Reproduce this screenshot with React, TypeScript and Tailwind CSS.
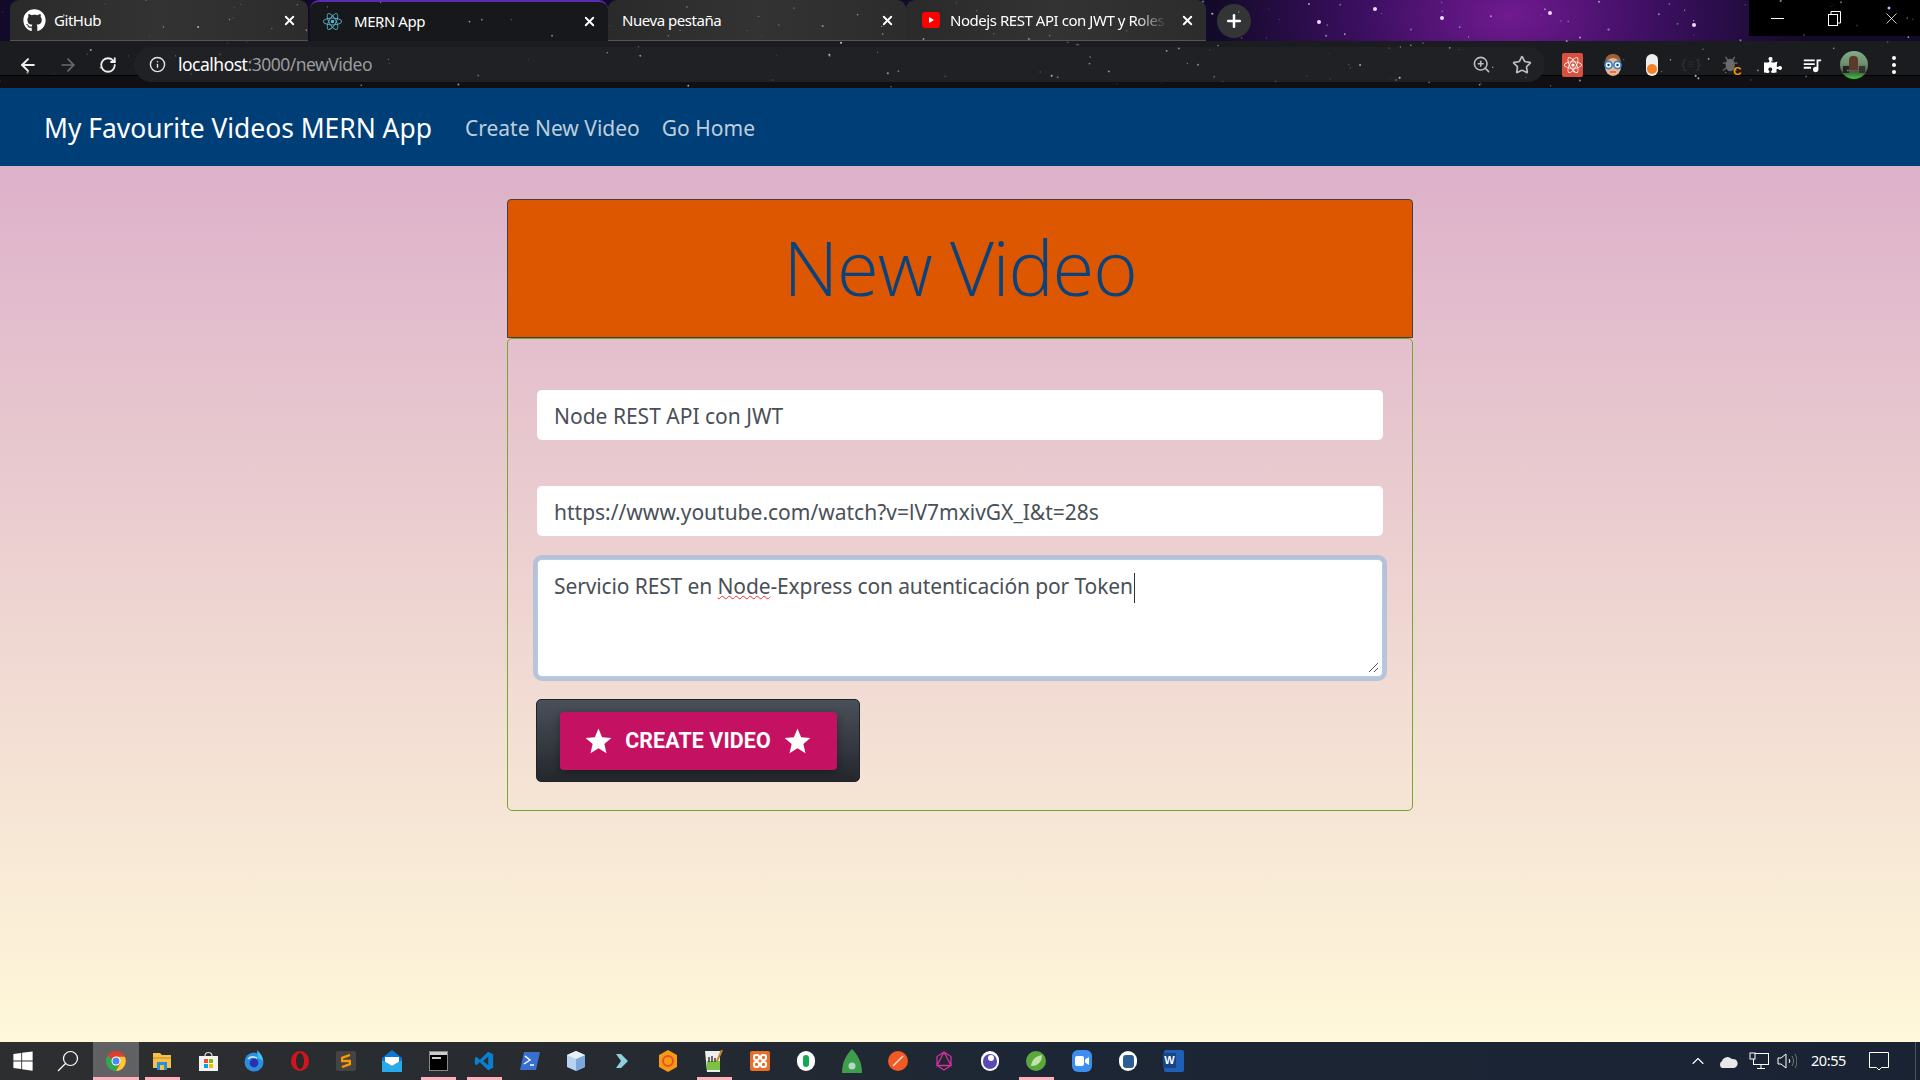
import { ReactNode } from 'react';
import { ArrowLeft, ArrowRight, ChevronUp, Info, Plus, RotateCw, Search, Star, X, ZoomIn } from 'lucide-react';
import { FaGithub, FaPuzzlePiece, FaReact, FaWindows } from 'react-icons/fa';
import { MdQueueMusic, MdStar } from 'react-icons/md';

// pseudo random star field for the wallpaper
function makeStars(count: number) {
  let seed = 7;
  const next = () => {
    seed = (seed * 16807) % 2147483647;
    return seed / 2147483647;
  };
  return Array.from({ length: count }, () => ({
    x: next() * 1920,
    y: next() * 88,
    r: 0.4 + next() * 0.7,
    o: 0.15 + next() * 0.55,
  }));
}

const stars = makeStars(190);

function StarField() {
  return (
    <svg className="absolute inset-0 pointer-events-none" width="1920" height="88">
      {stars.map((s, i) => (
        <circle key={i} cx={s.x} cy={s.y} r={s.r} fill="#fff" opacity={s.o} />
      ))}
      <circle cx="1375" cy="9" r="2" fill="#f0d8ff" />
      <circle cx="1319" cy="22" r="2" fill="#f0d8ff" />
      <circle cx="1442" cy="18" r="2" fill="#f0d8ff" />
      <circle cx="1694" cy="25" r="2" fill="#f0d8ff" />
      <circle cx="1550" cy="13" r="2" fill="#f0d8ff" />
      <circle cx="1889" cy="8" r="1.5" fill="#c7b4ff" />
    </svg>
  );
}

function Tab({ icon, title, active, fade, last }: { icon?: ReactNode; title: string; active?: boolean; fade?: boolean; last?: boolean }) {
  return (
    <div
      className={`relative flex h-[41px] w-[298px] items-center rounded-t-[9px] ${
        active ? 'bg-[#17181b] border-t-2 border-[#5b2bb0]' : 'bg-[linear-gradient(90deg,#2a2a2a,#333333_50%,#2c2c2c)] border-b border-[#55554f]'
      } ${last ? 'w-[300px]' : ''}`}
    >
      {icon ? <div className="ml-[13px] flex w-[31px] shrink-0 items-center">{icon}</div> : <div className="w-[14px]" />}
      <span
        className={`min-w-0 flex-1 overflow-hidden whitespace-nowrap font-['Noto_Sans',sans-serif] text-[15px] tracking-[-0.45px] text-white ${
          fade ? '[mask-image:linear-gradient(90deg,#000_85%,transparent)]' : ''
        }`}
      >
        {title}
      </span>
      <X size={15} strokeWidth={3} className="ml-[13px] mr-[11px] shrink-0 text-white" />
    </div>
  );
}

function YoutubeIcon() {
  return (
    <svg className="ml-[3px]" width="18" height="16" viewBox="0 0 18 16">
      <rect width="18" height="16" rx="3" fill="#f00" />
      <path d="M7 5l5 3-5 3z" fill="#fff" />
    </svg>
  );
}

function RestoreIcon() {
  return (
    <svg width="13" height="15" viewBox="0 0 13 15" fill="none" stroke="#fff" strokeWidth="1">
      <rect x="0.5" y="3.5" width="9" height="11" />
      <path d="M3 3V0.5h9.5V12H10" />
    </svg>
  );
}

function TabStrip() {
  return (
    <div className="flex h-[41px]">
      <div className="ml-[10px] flex">
        <Tab icon={<FaGithub size={23} color="#fff" />} title="GitHub" />
        <div className="w-[2px]" />
        <Tab active icon={<FaReact size={19} color="#5bb8c9" />} title="MERN App" />
        <Tab title="Nueva pestaña" />
        <Tab last fade icon={<YoutubeIcon />} title="Nodejs REST API con JWT y Roles" />
      </div>
      <div className="ml-[11px] mt-[4px] flex h-[34px] w-[34px] items-center justify-center rounded-full bg-[#333436]">
        <Plus size={20} strokeWidth={3} color="#fff" />
      </div>
      <div className="ml-auto flex h-[36px] w-[171px] items-center bg-black">
        <div className="flex w-[57px] justify-center">
          <div className="h-px w-[13px] bg-white" />
        </div>
        <div className="flex w-[57px] justify-center">
          <RestoreIcon />
        </div>
        <div className="flex w-[57px] justify-center">
          <X size={19} strokeWidth={1} color="#fff" />
        </div>
      </div>
    </div>
  );
}

function FaceIcon() {
  return (
    <svg width="20" height="24" viewBox="0 0 20 24">
      <path d="M2 10C2 3 6 1 10 1s8 2 8 9v4H2z" fill="#9a6238" />
      <ellipse cx="10" cy="14" rx="8" ry="9" fill="#eeb48f" />
      <circle cx="5.5" cy="12" r="3.6" fill="#fff" stroke="#2a7fd6" strokeWidth="1.6" />
      <circle cx="14.5" cy="12" r="3.6" fill="#fff" stroke="#2a7fd6" strokeWidth="1.6" />
      <circle cx="5.5" cy="12" r="1.2" fill="#234" />
      <circle cx="14.5" cy="12" r="1.2" fill="#234" />
      <path d="M7 19h6" stroke="#b5533a" strokeWidth="1.2" />
    </svg>
  );
}

function PillIcon() {
  return (
    <div className="flex h-[22px] w-[12px] items-end justify-center rounded-full bg-[#eeeeee] pb-[2px]">
      <div className="h-[10px] w-[10px] rounded-full bg-[#f58025]" />
    </div>
  );
}

function BugIcon() {
  return (
    <svg width="22" height="24" viewBox="0 0 22 24">
      <ellipse cx="9" cy="12" rx="5" ry="7" fill="#6b6b6b" />
      <path d="M4 3l3 5M14 3l-3 5M1 10h4M17 10h-4M1 18l4-3M16 18l-4-3" stroke="#6b6b6b" strokeWidth="1.4" />
      <text x="12" y="23" fontSize="13" fontWeight="700" fill="#f59300" fontFamily="Liberation Sans, sans-serif">C</text>
    </svg>
  );
}

function Avatar() {
  return (
    <div className="relative h-[28px] w-[28px] overflow-hidden rounded-full bg-[linear-gradient(180deg,#7fae8a_0%,#6f8f6e_45%,#4d5a44_75%,#2fd22f_100%)]">
      <div className="absolute left-[9px] top-[5px] h-[14px] w-[9px] rounded-t-[4px] bg-[#5a3a2a]" />
      <div className="absolute left-[3px] top-[15px] h-[7px] w-[6px] bg-[#222]" />
      <div className="absolute right-[3px] top-[15px] h-[7px] w-[6px] bg-[#333]" />
    </div>
  );
}

function Toolbar() {
  return (
    <div className="flex h-[47px] items-center bg-[linear-gradient(180deg,#1b1c1f_34px,#000_34px,#000_35px,#101013_35px)] pb-[6px] pt-[6px]">
      <div className="flex w-[134px] items-center pl-[7px]">
        <div className="flex w-[41px] justify-center"><ArrowLeft size={20} strokeWidth={2.4} color="#eee" /></div>
        <div className="flex w-[40px] justify-center"><ArrowRight size={20} strokeWidth={2} color="#6a6b6d" /></div>
        <div className="flex w-[40px] justify-center"><RotateCw size={18} strokeWidth={2.4} color="#eee" /></div>
      </div>
      <div className="flex h-[35px] w-[1411px] items-center rounded-full bg-[#202124]">
        <Info size={17} strokeWidth={2} color="#e4e4e4" className="ml-[15px]" />
        <div className="ml-[12px] font-['Noto_Sans',sans-serif] text-[17.5px] tracking-[-0.5px] text-white">
          localhost<span className="text-[#9a9b9d]">:3000/newVideo</span>
        </div>
        <ZoomIn size={19} strokeWidth={2} color="#bdbdbd" className="ml-auto" />
        <Star size={20} strokeWidth={2} color="#bdbdbd" className="ml-[21px] mr-[13px]" />
      </div>
      <div className="flex items-center">
        <div className="ml-[17px] flex h-[24px] w-[21px] items-center justify-center rounded-[2px] bg-[#d9503f]"><FaReact size={18} color="#fff" /></div>
        <div className="ml-[20px] flex w-[20px] justify-center"><FaceIcon /></div>
        <div className="ml-[19px] flex w-[20px] justify-center"><PillIcon /></div>
        <div className="ml-[19px] flex w-[20px] justify-center font-['Liberation_Mono',monospace] text-[12px] font-bold text-[#2c2d2f]">{'{≡}'}</div>
        <div className="ml-[21px] flex w-[20px] justify-center"><BugIcon /></div>
        <div className="ml-[21px] flex w-[20px] justify-center"><FaPuzzlePiece size={18} color="#fff" /></div>
        <div className="ml-[18px] flex w-[22px] justify-center"><MdQueueMusic size={24} color="#fff" /></div>
        <div className="ml-[17px]"><Avatar /></div>
        <div className="ml-[24px] flex flex-col gap-[3px]">
          <div className="h-[4px] w-[4px] rounded-full bg-white" />
          <div className="h-[4px] w-[4px] rounded-full bg-white" />
          <div className="h-[4px] w-[4px] rounded-full bg-white" />
        </div>
      </div>
    </div>
  );
}

function Navbar() {
  return (
    <nav className="flex h-[78px] shrink-0 items-center bg-[#003e77] pl-[44px] pt-[4px] font-['Noto_Sans',sans-serif]">
      <span className="text-[26.4px] text-white">My Favourite Videos MERN App</span>
      <span className="ml-[33px] text-[21px] text-white/75">Create New Video</span>
      <span className="ml-[22px] text-[21px] text-white/75">Go Home</span>
    </nav>
  );
}

function VideoForm() {
  const inputCls =
    "h-[50px] w-full rounded-[5px] bg-white px-[17px] pt-[2px] font-['Noto_Sans',sans-serif] text-[21px] text-[#495057] outline-none";
  return (
    <div className="w-[906px]">
      <div className="flex h-[139px] items-center justify-center rounded-t-[4px] border border-[#47403a] bg-[#dc5700] pb-[4px]">
        <h1 className="font-['Open_Sans',sans-serif] text-[76px] leading-none font-light tracking-[-1.2px] text-[#0a427c]">New Video</h1>
      </div>
      <div className="flex h-[473px] flex-col rounded-[5px] border border-[#72a832] px-[29px] pt-[51px]">
        <input className={inputCls} readOnly value="Node REST API con JWT" />
        <input className={`${inputCls} mt-[46px]`} readOnly value="https://www.youtube.com/watch?v=lV7mxivGX_I&t=28s" />
        <div className="relative mt-[23px] h-[118px] rounded-[5px] border border-[#a9d0ea] bg-white px-[16px] pt-[11px] font-['Noto_Sans',sans-serif] text-[21px] tracking-[-0.12px] text-[#495057] shadow-[0_0_0_4px_rgba(150,180,220,0.6)]">
          Servicio REST en <span className="underline decoration-wavy decoration-red-500 decoration-1">Node</span>-Express con autenticación por Token
          <span className="ml-px inline-block h-[30px] w-px bg-[#333] align-middle" />
          <svg className="absolute bottom-[3px] right-[3px]" width="11" height="11" viewBox="0 0 11 11" stroke="#555" strokeWidth="1">
            <path d="M1 10L10 1M6 10L10 6" />
          </svg>
        </div>
        <div className="mt-[22px] -ml-px flex h-[83px] w-[324px] items-center justify-center rounded-[5px] border border-[#1f2226] bg-[linear-gradient(180deg,#4a505a,#24272c)]">
          <div className="flex h-[58px] w-[277px] items-center justify-center gap-[11px] rounded-[4px] bg-[#c51162] pt-[1px] font-['Roboto',sans-serif] text-[21.4px] font-bold tracking-[0.1px] text-white shadow-[0_3px_8px_rgba(0,0,0,0.35)]">
            <MdStar size={31} />
            CREATE VIDEO
            <MdStar size={31} />
          </div>
        </div>
      </div>
    </div>
  );
}

function Tile({ children, mark, wide, active }: { children: ReactNode; mark?: boolean; wide?: boolean; active?: boolean }) {
  return (
    <div className={`relative flex h-[38px] w-[46px] shrink-0 items-center justify-center ${active ? 'bg-white/25' : ''}`}>
      {children}
      {mark && <div className={`absolute bottom-0 h-[3px] bg-[#ffb0ba] ${wide ? 'w-[46px]' : 'w-[35px]'}`} />}
    </div>
  );
}

function ChromeIcon() {
  return (
    <svg width="20" height="20" viewBox="0 0 24 24">
      <circle cx="12" cy="12" r="12" fill="#e33b2e" />
      <path d="M12 12L1.6 6A12 12 0 0 0 12 24l5-12z" fill="#2fa84f" />
      <path d="M12 7h10.6A12 12 0 0 1 12 24l5-9z" fill="#fcc934" />
      <circle cx="12" cy="12" r="5.4" fill="#fff" />
      <circle cx="12" cy="12" r="4.2" fill="#4a8af4" />
    </svg>
  );
}

function SearchGlass() {
  return (
    <svg width="22" height="22" viewBox="0 0 22 22" fill="none" stroke="#fff" strokeWidth="1.2">
      <circle cx="13.5" cy="8.5" r="7" />
      <path d="M8.500 13.500L1 21" />
    </svg>
  );
}

function Taskbar() {
  return (
    <div className="flex h-[38px] shrink-0 items-center bg-[linear-gradient(90deg,#2d2e2f,#272b30_30%,#1c2635_55%,#1a2333)]">
      <div className="flex w-[45px] justify-center"><FaWindows size={22} color="#fff" /></div>
      <div className="flex w-[45px] justify-center"><SearchGlass /></div>
      <div className="ml-[3px] flex">
        <Tile active mark wide><ChromeIcon /></Tile>
        <Tile mark>
          <svg width="18" height="18" viewBox="0 0 18 18"><path d="M0 1h7l2 2h9v13H0z" fill="#f4c14f" /><rect x="0" y="5" width="18" height="2" fill="#e0a52c" /><rect x="4" y="10" width="10" height="8" fill="#2a8fd8" /><rect x="7" y="13" width="4" height="5" fill="#f4c14f" /></svg>
        </Tile>
        <Tile>
          <svg width="19" height="20" viewBox="0 0 19 20"><path d="M6 5a3.5 3.5 0 0 1 7 0" fill="none" stroke="#ddd" strokeWidth="1.2" /><rect y="5" width="19" height="15" fill="#f3f3f3" /><rect x="5" y="8" width="4" height="4" fill="#f25022" /><rect x="10" y="8" width="4" height="4" fill="#7fba00" /><rect x="5" y="13" width="4" height="4" fill="#00a4ef" /><rect x="10" y="13" width="4" height="4" fill="#ffb900" /></svg>
        </Tile>
        <Tile>
          <svg width="20" height="22" viewBox="0 0 20 22"><circle cx="10" cy="12" r="9.5" fill="#2a8fe0" /><path d="M13 0c3 3 6 6 6 11l-5-3z" fill="#3ec0f0" /><circle cx="10" cy="13" r="4.4" fill="#2b2fb0" /><path d="M4 9c3-3 7-2 9-1" stroke="#bfe5ff" strokeWidth="1.6" fill="none" /></svg>
        </Tile>
        <Tile>
          <svg width="20" height="22" viewBox="0 0 20 22"><ellipse cx="10" cy="11" rx="9" ry="10" fill="#d4131d" /><ellipse cx="10" cy="11" rx="4" ry="8" fill="#28292b" /></svg>
        </Tile>
        <Tile>
          <div className="flex h-[20px] w-[20px] items-center justify-center rounded-[2px] bg-[#444]">
            <svg width="10" height="14" viewBox="0 0 10 14"><path d="M9 1L1 4v3l8 0v3l-8 3" fill="none" stroke="#ff9800" strokeWidth="2.4" /></svg>
          </div>
        </Tile>
        <Tile>
          <svg width="20" height="22" viewBox="0 0 20 22"><path d="M10 0l10 8v14H0V8z" fill="#0a78d4" /><path d="M3 7h14v5l-7 4-7-4z" fill="#fff" /><path d="M0 10l10 6 10-6v12H0z" fill="#29a8ea" /></svg>
        </Tile>
        <Tile mark>
          <div className="h-[20px] w-[19px] border border-[#888] bg-black">
            <div className="h-[3px] bg-[#ccc]" />
            <div className="ml-[2px] mt-[2px] h-[2px] w-[9px] bg-[#ccc]" />
          </div>
        </Tile>
        <Tile mark>
          <svg width="20" height="20" viewBox="0 0 24 24"><path d="M17 1l6 3v16l-6 3-10-9.5L3 17l-2-1.5V8.5L3 7l4 3.5z" fill="#0a7fcf" /><path d="M17 7l-6 5 6 5z" fill="#2b2d30" /></svg>
        </Tile>
        <Tile>
          <svg width="20" height="18" viewBox="0 0 20 18"><path d="M4 0h16l-4 18H0z" fill="#3a6fd0" /><path d="M5 4l5 4-6 4M10 13h4" stroke="#fff" strokeWidth="1.4" fill="none" /></svg>
        </Tile>
        <Tile>
          <svg width="18" height="20" viewBox="0 0 18 20"><path d="M9 0l9 4v12l-9 4-9-4V4z" fill="#b6d3f2" /><path d="M9 8l9-4v12l-9 4z" fill="#7da8de" /><path d="M9 0l9 4-9 4-9-4z" fill="#e6f1fc" /></svg>
        </Tile>
        <Tile>
          <svg width="14" height="16" viewBox="0 0 14 16"><path d="M1 1h5l7 7-7 7H1l5-7z" fill="#8fd0dd" /></svg>
        </Tile>
        <Tile>
          <svg width="20" height="22" viewBox="0 0 20 22"><path d="M10 0l9 5v12l-9 5-9-5V5z" fill="#f59a12" /><circle cx="10" cy="11" r="5" fill="none" stroke="#e5532d" strokeWidth="2" /></svg>
        </Tile>
        <Tile mark>
          <svg width="18" height="22" viewBox="0 0 18 22"><path d="M0 1h15v21H2z" fill="#eee" /><rect x="2" y="11" width="13" height="9" fill="#7cc242" /><path d="M4 7v5M7 6v6M10 8v4" stroke="#333" strokeWidth="1.4" /><path d="M17 0l-5 11" stroke="#c98a2b" strokeWidth="2" /></svg>
        </Tile>
        <Tile>
          <div className="flex h-[20px] w-[20px] items-center justify-center rounded-[2px] bg-[#e8702a]">
            <svg width="14" height="14" viewBox="0 0 14 14" fill="none" stroke="#fff" strokeWidth="2"><rect x="1" y="1" width="5" height="5" rx="2" /><rect x="8" y="1" width="5" height="5" rx="2" /><rect x="1" y="8" width="5" height="5" rx="2" /><rect x="8" y="8" width="5" height="5" rx="2" /></svg>
          </div>
        </Tile>
        <Tile>
          <div className="flex h-[20px] w-[18px] items-center justify-center rounded-full bg-white"><div className="h-[12px] w-[6px] rounded-full bg-[#13aa52]" /></div>
        </Tile>
        <Tile>
          <svg width="20" height="24" viewBox="0 0 20 24"><path d="M10 0C15 5 20 12 20 24H0C0 12 5 5 10 0z" fill="#3f9e4d" /><circle cx="10" cy="17" r="3.5" fill="#b5d9c0" /></svg>
        </Tile>
        <Tile>
          <svg width="20" height="20" viewBox="0 0 20 20"><circle cx="10" cy="10" r="10" fill="#f15a24" /><path d="M5 15L15 5" stroke="#ffe1d2" strokeWidth="1.5" /></svg>
        </Tile>
        <Tile>
          <svg width="16" height="20" viewBox="0 0 16 20" fill="none" stroke="#d62f9e" strokeWidth="1.3"><path d="M8 1l7 4.5v9L8 19l-7-4.5v-9zM8 1L1 14.5h14z" /></svg>
        </Tile>
        <Tile>
          <div className="relative flex h-[20px] w-[18px] items-center justify-center rounded-full bg-white"><div className="h-[15px] w-[14px] rounded-full bg-[#5a4bb4]" /><div className="absolute right-[5px] top-[4px] h-[6px] w-[6px] rounded-full bg-white" /></div>
        </Tile>
        <Tile mark>
          <svg width="20" height="22" viewBox="0 0 20 22"><circle cx="10" cy="11" r="10" fill="#5aa83c" /><path d="M5 16C6 9 10 6 16 5c0 6-3 11-11 11z" fill="#bfe3a8" /></svg>
        </Tile>
        <Tile>
          <div className="flex h-[22px] w-[20px] items-center justify-center rounded-[6px] bg-[#3d8cf0]">
            <svg width="14" height="10" viewBox="0 0 14 10" fill="#fff"><rect width="9" height="10" rx="2" /><path d="M10 3.5L14 1v8l-4-2.5z" /></svg>
          </div>
        </Tile>
        <Tile>
          <div className="flex h-[20px] w-[18px] items-center justify-center rounded-full bg-white"><div className="h-[13px] w-[11px] rounded-[3px] bg-[#2d5f96]" /></div>
        </Tile>
        <Tile>
          <div className="relative h-[22px] w-[20px] rounded-[2px] bg-[#1f5fb5]">
            <div className="absolute left-[-1px] top-[3px] flex h-[15px] w-[13px] items-center justify-center bg-[#16458a] font-['Liberation_Sans',sans-serif] text-[11px] font-bold text-white">W</div>
          </div>
        </Tile>
      </div>
      <div className="ml-auto flex items-center text-white">
        <ChevronUp size={20} strokeWidth={1.3} />
        <svg className="ml-[10px]" width="20" height="13" viewBox="0 0 20 13"><path d="M4 13a4 4 0 0 1 0-7 6 6 0 0 1 10-2 4.5 4.5 0 0 1 2 9z" fill="#e8e8e8" /></svg>
        <svg className="ml-[11px]" width="20" height="18" viewBox="0 0 20 18" fill="none" stroke="#fff"><rect x="4.5" y="1.5" width="15" height="11" /><path d="M12 13v3M8 16.5h8" /><rect x="1" y="1" width="5" height="6" fill="#1a2333" /></svg>
        <svg className="ml-[8px]" width="20" height="16" viewBox="0 0 20 16" fill="none" stroke="#fff"><path d="M1 5h3l5-4v14l-5-4H1z" /><path d="M12 6c1 1 1 3 0 4" /><path d="M15 3c2 3 2 7 0 10M18 1c2.5 4 2.5 10 0 14" stroke="#777" /></svg>
        <span className="ml-[14px] font-['Noto_Sans',sans-serif] text-[14.5px] tracking-[-0.4px]">20:55</span>
        <svg className="ml-[23px]" width="20" height="19" viewBox="0 0 20 19" fill="none" stroke="#fff"><path d="M0.5 0.5h19v15H12.5L10 18l-2.5-2.5H0.5z" /></svg>
        <div className="ml-[26px] mr-[4px] h-[38px] w-px bg-[#555]" />
      </div>
    </div>
  );
}

export default function App() {
  return (
    <div className="flex h-screen flex-col overflow-hidden">
      <header className="relative h-[88px] shrink-0 bg-[radial-gradient(ellipse_300px_180px_at_1510px_15px,#701a90_0%,#3b0f60_50%,#120a28_100%)]">
        <TabStrip />
        <Toolbar />
        <StarField />
      </header>
      <Navbar />
      <main className="flex flex-1 justify-center bg-[linear-gradient(180deg,#ddb1ca,#fff8d9)] pt-[33px]">
        <VideoForm />
      </main>
      <Taskbar />
    </div>
  );
}
